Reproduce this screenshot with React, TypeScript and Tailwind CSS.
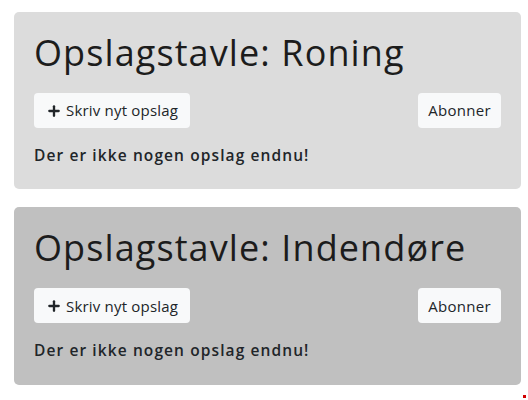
import { Plus } from "lucide-react";

const boards = [
  { name: "Roning", bg: "bg-[#dcdcdc]" },
  { name: "Indendøre", bg: "bg-[#c0c0c0]" },
];

function Board({ name, bg }: { name: string; bg: string }) {
  return (
    <div className={`rounded-[5px] px-5 pt-[19px] pb-[22px] ${bg}`}>
      <h1 className="text-[36px] leading-[44px] tracking-[1.1px] text-[#1c1c1c]">
        Opslagstavle: {name}
      </h1>
      <div className="mt-[18px] flex items-center justify-between">
        <button className="flex h-[35px] items-center gap-[4px] rounded bg-[#f8f9fa] px-[12px] text-[15px] tracking-[0.2px] text-[#212529]">
          <Plus size={16} strokeWidth={3.5} />
          Skriv nyt opslag
        </button>
        <button className="h-[35px] rounded bg-[#f8f9fa] px-[10px] text-[15px] tracking-[0.3px] text-[#212529]">Abonner</button>
      </div>
      <p className="mt-[16px] text-[15.5px] font-semibold tracking-[1.1px] text-[#212529]">Der er ikke nogen opslag endnu!</p>
    </div>
  );
}

export default function App() {
  return (
    <div className="relative h-[400px] w-[528px] bg-white px-[14px] pt-3 font-['Open_Sans',sans-serif]">
      <div className="flex w-[507px] flex-col gap-[18px]">
        {boards.map((b) => (
          <Board key={b.name} {...b} />
        ))}
      </div>
      <div className="absolute bottom-[2px] right-[2px] h-[3px] w-[3px] bg-[#d00000]" />
    </div>
  );
}
